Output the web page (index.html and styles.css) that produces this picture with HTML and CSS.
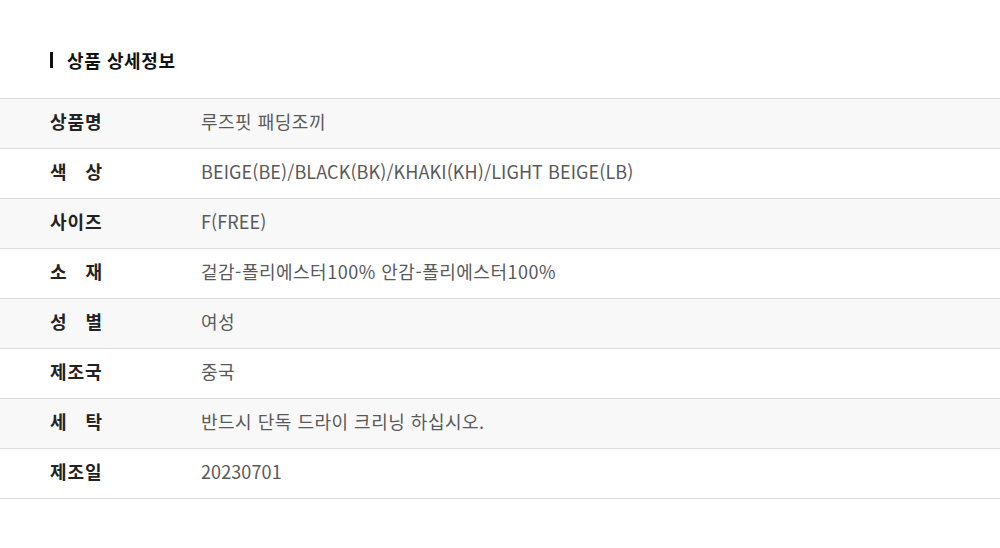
FILE: index.html
```html
<!DOCTYPE html>
<html lang="ko">
<head>
<meta charset="utf-8">
<link rel="stylesheet" href="styles.css">
</head>
<body>
<section class="detail">
  <h2 class="title">상품 상세정보</h2>
  <div class="table">
    <div class="row shade"><div class="label">상품명</div><div class="value">루즈핏 패딩조끼</div></div>
    <div class="row"><div class="label">색 상</div><div class="value latin">BEIGE(BE)/BLACK(BK)/KHAKI(KH)/LIGHT BEIGE(LB)</div></div>
    <div class="row shade"><div class="label">사이즈</div><div class="value latin">F(FREE)</div></div>
    <div class="row"><div class="label">소 재</div><div class="value">겉감-폴리에스터100% 안감-폴리에스터100%</div></div>
    <div class="row shade"><div class="label">성 별</div><div class="value">여성</div></div>
    <div class="row"><div class="label">제조국</div><div class="value">중국</div></div>
    <div class="row shade"><div class="label">세 탁</div><div class="value">반드시 단독 드라이 크리닝 하십시오.</div></div>
    <div class="row"><div class="label">제조일</div><div class="value latin">20230701</div></div>
  </div>
</section>
</body>
</html>
```
FILE: styles.css
```css
* { box-sizing: border-box; }
html, body { margin: 0; padding: 0; background: #fff; }
body {
  font-family: "Noto Sans CJK KR", "Noto Sans", sans-serif;
  color: #222;
}
.detail { padding-top: 52px; }
.title {
  margin: 0 0 30px 50px;
  padding-left: 14px;
  border-left: 3px solid #111;
  font-size: 18px;
  font-weight: 700;
  line-height: 16px;
  color: #111;
  letter-spacing: 0.6px;
}
.table { border-top: 1px solid #ddd; }
.row {
  display: flex;
  align-items: center;
  height: 50px;
  padding-bottom: 6px;
  border-bottom: 1px solid #ddd;
}
.row.shade { background: #f8f8f8; }
.label {
  flex: none;
  width: 53px;
  margin-left: 50px;
  margin-right: 98px;
  font-size: 18px;
  font-weight: 700;
  color: #222;
  letter-spacing: 1px;
  white-space: nowrap;
  text-align: justify;
  text-align-last: justify;
}
.value {
  font-size: 18px;
  color: #595959;
  letter-spacing: 0.5px;
}
.value.latin { letter-spacing: 0.1px; }
```
